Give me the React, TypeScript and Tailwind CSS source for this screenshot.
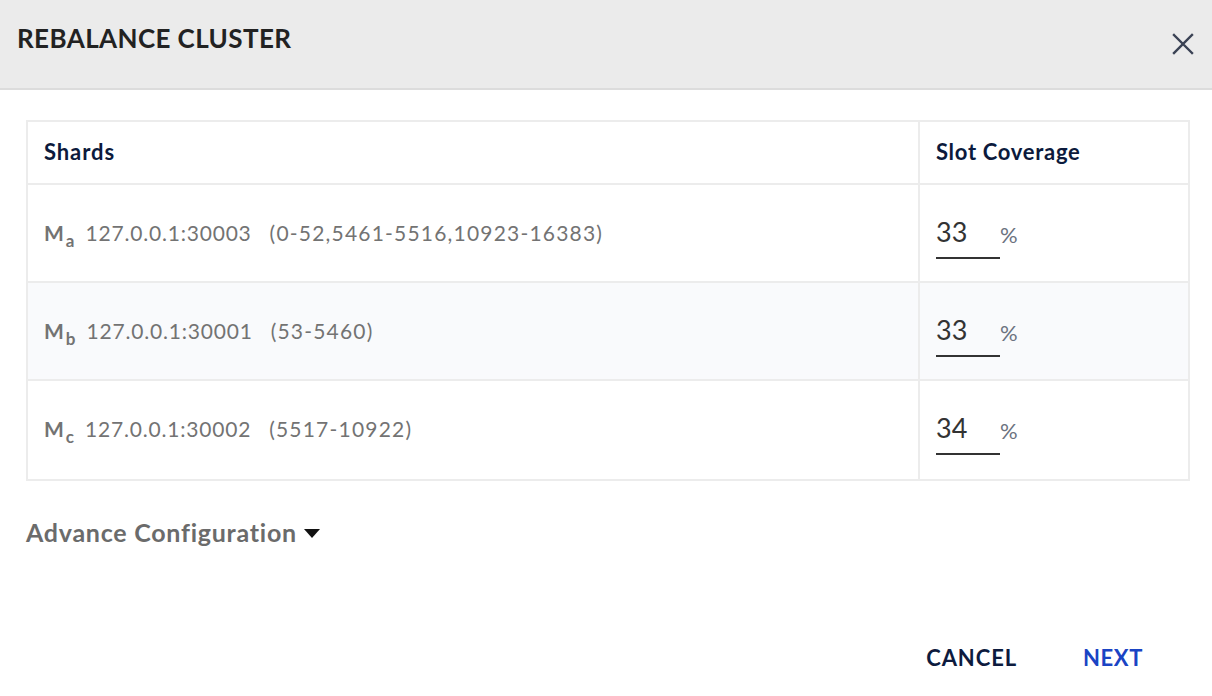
import React from "react";

const rows = [
  { sub: "a", addr: "127.0.0.1:30003", range: "(0-52,5461-5516,10923-16383)", val: "33", bg: "bg-white" },
  { sub: "b", addr: "127.0.0.1:30001", range: "(53-5460)", val: "33", bg: "bg-[#f9fafc]" },
  { sub: "c", addr: "127.0.0.1:30002", range: "(5517-10922)", val: "34", bg: "bg-white" },
];

export default function App() {
  return (
    <div className="w-[1212px] h-[696px] bg-white flex flex-col" style={{ fontFamily: "Lato, 'Open Sans', sans-serif" }}>
      <div className="h-[90px] bg-[#ebebeb] border-b-2 border-[#dcdcdc] flex items-start justify-between pl-[17px] pr-[18px] shrink-0">
        <h1 className="mt-[19px] text-[26px] font-bold text-[#222222] tracking-[0.4px]">REBALANCE CLUSTER</h1>
        <button className="mt-[33px] text-[#3a4254]">
          <svg width="22" height="22" viewBox="0 0 22 22" fill="none" stroke="currentColor" strokeWidth="2.4" strokeLinecap="square">
            <path d="M2 2 L20 20 M20 2 L2 20" />
          </svg>
        </button>
      </div>
      <div className="pl-[26px] pr-[22px] pt-[30px]">
        <div className="border-2 border-[#ececec] flex flex-col">
          <div className="flex h-[63px] border-b-2 border-[#ececec]">
            <div className="flex-1 flex items-center pl-[16px] pb-[2px] text-[22px] font-bold text-[#0c1a3c] tracking-[0.9px]">Shards</div>
            <div className="w-[270px] border-l-2 border-[#ececec] flex items-center pl-[16px] pb-[2px] text-[22px] font-bold text-[#0c1a3c] tracking-[0.7px]">Slot Coverage</div>
          </div>
          {rows.map((r, i) => (
            <div key={i} className={`flex h-[98px] ${r.bg} ${i < 2 ? "border-b-2 border-[#ececec]" : ""}`}>
              <div className="flex-1 flex items-start pt-[32px] pl-[16px] text-[21px] text-[#737373] tracking-[0.8px]">
                <span className="font-bold tracking-normal">M</span>
                <span className="font-bold text-[17px] relative top-[11px] ml-[2px] mr-[11px] tracking-normal">{r.sub}</span>
                <span>{r.addr}</span>
                <span className="ml-[18px] tracking-[1.2px]">{r.range}</span>
              </div>
              <div className="w-[270px] border-l-2 border-[#ececec] flex items-start pt-[30px] pl-[16px]">
                <div className="w-[64px] border-b-2 border-[#333333] h-[44px] text-[27px] text-[#333333] leading-[34px]">{r.val}</div>
                <span className="mt-[3px] text-[22px] text-[#6b7280] tracking-[1px]">%</span>
              </div>
            </div>
          ))}
        </div>
        <div className="mt-[33px] flex items-center text-[25px] font-bold text-[#6b6b6b] tracking-[0.75px]">
          <span>Advance Configuration</span>
          <svg className="ml-[7px] mt-[2px]" width="16" height="10" viewBox="0 0 16 10">
            <path d="M0 0 H16 L8 9 Z" fill="#111111" />
          </svg>
        </div>
      </div>
      <div className="flex-1" />
      <div className="flex justify-end items-center pr-[69px] pb-[22px] gap-[66px] text-[22px] font-bold tracking-[0.6px]">
        <button className="text-[#0d1b3e] tracking-[0.9px]">CANCEL</button>
        <button className="text-[#1a44c4]">NEXT</button>
      </div>
    </div>
  );
}
